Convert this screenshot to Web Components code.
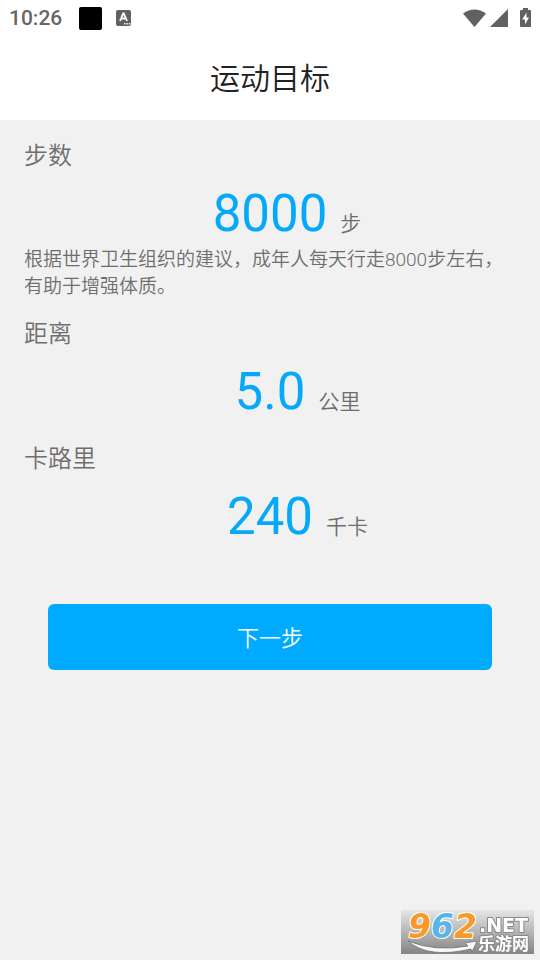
<!DOCTYPE html>
<html lang="zh-CN">
<head>
<meta charset="utf-8">
<meta name="viewport" content="width=device-width, initial-scale=1">
<title>运动目标</title>
<style>
body{margin:0;background:#f1f1f1;font-family:Roboto,"Noto Sans CJK SC",sans-serif;color:#6e6e6e}
</style>
</head>
<body>
<goal-page></goal-page>
<script>
const define=(name,html,setup)=>customElements.define(name,class extends HTMLElement{
  constructor(){
    super();
    const t=document.createElement('template');
    t.innerHTML=html;
    this.attachShadow({mode:'open'}).append(t.content.cloneNode(true));
    if(setup)setup(this);
  }
});

define('status-bar',`
<style>
:host{display:flex;align-items:center;height:36px;padding:0 9px;background:#fff;color:#666}
time{font-size:21px;line-height:24px;font-weight:500;margin-right:17px}
svg{display:block;fill:#616161}
.app{width:23px;height:23px;border-radius:2px;background:#000;margin-right:14px}
.right{display:flex;align-items:center;gap:4px;margin-left:auto}
.battery{margin-left:7px}
</style>
<time>10:26</time><span class="app"></span>
<svg width="15" height="16" viewBox="0 0 15 16"><rect width="15" height="16" rx="2"/><path d="M4 11 7.2 3.5h.6L11 11M5.2 8.5h4.6" fill="none" stroke="#fff" stroke-width="1.8"/><path d="M8 13h1.4v1.4H8zM10.4 13h1.4v1.4h-1.4zM12.8 13h1.4v1.4h-1.4z" fill="#fff"/></svg>
<span class="right">
<svg width="23" height="19" viewBox="0 0 23 19"><path d="M0 4.500Q11.500-3.500 23 4.500L11.500 18Z"/></svg>
<svg width="19" height="19" viewBox="0 0 19 19"><path d="M0 18 18 0V18Z"/></svg>
<svg class="battery" width="11" height="20" viewBox="0 0 11 20"><path d="M3 0h5v2h2q1 0 1 1v15q0 1-1 1H1q-1 0-1-1V3q0-1 1-1h2z"/><path d="M6.500 4.500 2.200 11.500H5v5l4-7H6.500z" fill="#fff"/></svg>
</span>`);

define('page-header',`
<style>
:host{display:block;background:#fff;color:#212121;padding:20px 24px 18px}
h1{margin:0;font-size:30px;line-height:46px;font-weight:350;text-align:center}
</style>
<h1><slot></slot></h1>`);

define('goal-item',`
<style>
:host{display:block}
h2{margin:0;font-size:24px;line-height:36px;font-weight:350}
.row{display:grid;grid-template-columns:1fr auto 1fr;column-gap:13px;align-items:baseline;margin-top:10px}
.value{grid-column:2;font-size:51px;line-height:60px;color:#06a8fa}
.unit{font-size:21px;line-height:24px;font-weight:350}
::slotted(p){margin:2px 0 0;font-size:19px;line-height:27px;font-weight:350}
</style>
<h2></h2>
<div class="row"><span class="value"></span><span class="unit"></span></div>
<slot></slot>`,el=>{
  for(const [sel,key] of [['h2','label'],['.value','value'],['.unit','unit']])
    el.shadowRoot.querySelector(sel).textContent=el.getAttribute(key);
});

define('primary-button',`
<style>
:host{display:block}
button{display:block;width:100%;padding:18px 16px 14px;border:0;border-radius:6px;background:#00aaff;color:#fff;font:inherit;font-size:22px;line-height:34px;font-weight:350;cursor:pointer}
</style>
<button type="button"><slot></slot></button>`);

define('site-mark',`
<style>
:host{display:block;position:fixed;right:6px;bottom:6px}
svg{display:block;overflow:visible}
text{font-family:"DejaVu Sans","Noto Sans CJK SC",sans-serif;font-weight:700;paint-order:stroke;stroke-linejoin:round}
</style>
<svg width="133" height="44" viewBox="0 0 133 44" role="img" aria-label="962.NET 乐游网">
<defs><linearGradient id="g" x2="0" y2="1"><stop stop-color="#e6e6e6"/><stop offset="1" stop-color="#848484"/></linearGradient></defs>
<rect width="133" height="44" fill="url(#g)"/>
<path d="M7 31Q34 42 67 36L64 33 76 31 71 42 70 39Q27 49 7 31Z" fill="#f8f8f8" stroke="#707070" stroke-width=".8"/>
<g font-size="33" font-style="italic" stroke="#fff" stroke-width="2">
<text x="7" y="28" fill="#f79a2b">9<tspan fill="#5ab4ea">6</tspan>2</text></g>
<g fill="#fff" stroke="#8a8a8a" stroke-width="2">
<text x="78" y="22" font-size="19">.NET</text>
<text x="77" y="40" font-size="17">乐游网</text></g>
</svg>`);

define('goal-page',`
<style>
:host{display:block;min-height:100vh}
main{display:flex;flex-direction:column;gap:16px;padding:18px 24px}
goal-item + goal-item + goal-item{margin-top:3px}
primary-button{margin:41px 24px 0}
</style>
<status-bar></status-bar>
<page-header>运动目标</page-header>
<main>
<goal-item label="步数" value="8000" unit="步"><p>根据世界卫生组织的建议，成年人每天行走8000步左右，有助于增强体质。</p></goal-item>
<goal-item label="距离" value="5.0" unit="公里"></goal-item>
<goal-item label="卡路里" value="240" unit="千卡"></goal-item>
<primary-button>下一步</primary-button>
</main>
<site-mark></site-mark>`);
</script>
</body>
</html>
